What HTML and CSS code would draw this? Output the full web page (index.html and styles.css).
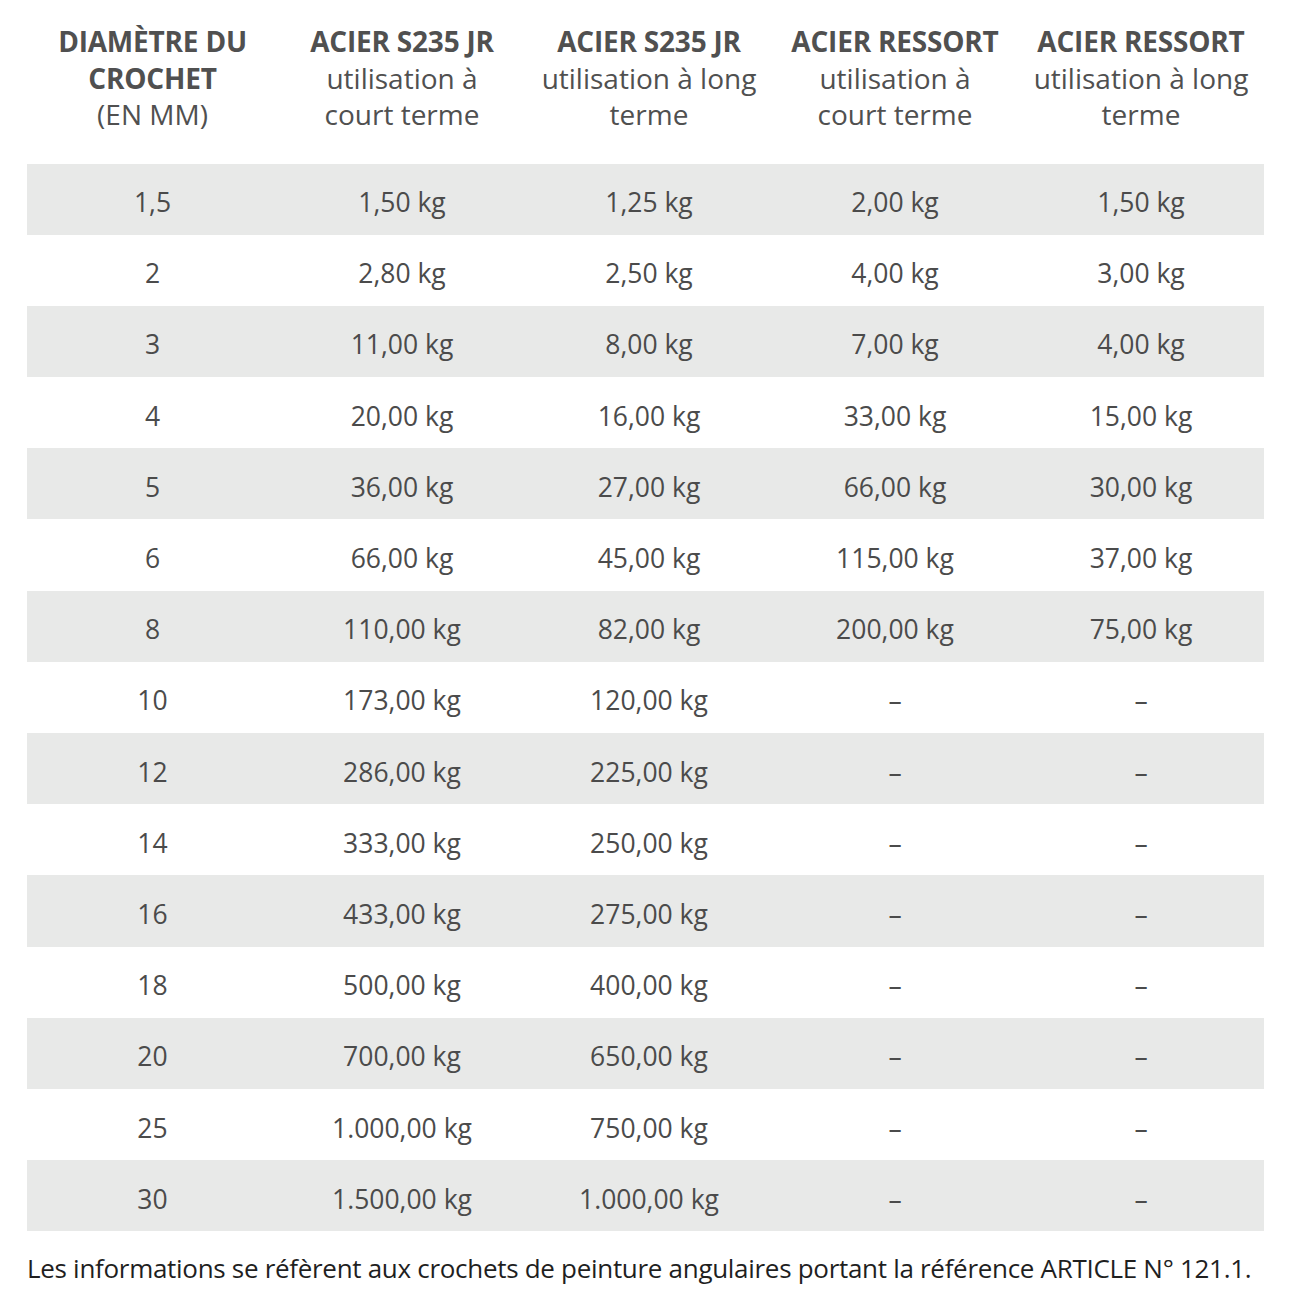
FILE: index.html
```html
<!DOCTYPE html>
<html lang="fr">
<head>
<meta charset="utf-8">
<link rel="stylesheet" href="styles.css">
</head>
<body>
<main class="page">
<table class="loads">
<colgroup>
<col class="c1"><col class="c2"><col class="c3"><col class="c4"><col class="c5">
</colgroup>
<thead>
<tr>
<th><span class="h">DIAMÈTRE DU</span><span class="h">CROCHET</span><span class="s">(EN MM)</span></th>
<th><span class="h">ACIER S235 JR</span><span class="s">utilisation à</span><span class="s">court terme</span></th>
<th><span class="h">ACIER S235 JR</span><span class="s">utilisation à long</span><span class="s">terme</span></th>
<th><span class="h">ACIER RESSORT</span><span class="s">utilisation à</span><span class="s">court terme</span></th>
<th><span class="h">ACIER RESSORT</span><span class="s">utilisation à long</span><span class="s">terme</span></th>
</tr>
</thead>
<tbody>
<tr><td>1,5</td><td>1,50 kg</td><td>1,25 kg</td><td>2,00 kg</td><td>1,50 kg</td></tr>
<tr><td>2</td><td>2,80 kg</td><td>2,50 kg</td><td>4,00 kg</td><td>3,00 kg</td></tr>
<tr><td>3</td><td>11,00 kg</td><td>8,00 kg</td><td>7,00 kg</td><td>4,00 kg</td></tr>
<tr><td>4</td><td>20,00 kg</td><td>16,00 kg</td><td>33,00 kg</td><td>15,00 kg</td></tr>
<tr><td>5</td><td>36,00 kg</td><td>27,00 kg</td><td>66,00 kg</td><td>30,00 kg</td></tr>
<tr><td>6</td><td>66,00 kg</td><td>45,00 kg</td><td>115,00 kg</td><td>37,00 kg</td></tr>
<tr><td>8</td><td>110,00 kg</td><td>82,00 kg</td><td>200,00 kg</td><td>75,00 kg</td></tr>
<tr><td>10</td><td>173,00 kg</td><td>120,00 kg</td><td>–</td><td>–</td></tr>
<tr><td>12</td><td>286,00 kg</td><td>225,00 kg</td><td>–</td><td>–</td></tr>
<tr><td>14</td><td>333,00 kg</td><td>250,00 kg</td><td>–</td><td>–</td></tr>
<tr><td>16</td><td>433,00 kg</td><td>275,00 kg</td><td>–</td><td>–</td></tr>
<tr><td>18</td><td>500,00 kg</td><td>400,00 kg</td><td>–</td><td>–</td></tr>
<tr><td>20</td><td>700,00 kg</td><td>650,00 kg</td><td>–</td><td>–</td></tr>
<tr><td>25</td><td>1.000,00 kg</td><td>750,00 kg</td><td>–</td><td>–</td></tr>
<tr><td>30</td><td>1.500,00 kg</td><td>1.000,00 kg</td><td>–</td><td>–</td></tr>
</tbody>
</table>
<p class="note">Les informations se réfèrent aux crochets de peinture angulaires portant la référence ARTICLE N° 121.1.</p>
</main>
</body>
</html>
```
FILE: styles.css
```css
html, body {
  margin: 0;
  padding: 0;
  background: #ffffff;
}
body {
  font-family: "Open Sans", "Noto Sans", sans-serif;
  color: #4a4a4a;
}
.page {
  padding: 23px 28px 0 27px;
  width: 1237px;
}
.loads {
  width: 1237px;
  border-collapse: collapse;
  table-layout: fixed;
}
.loads .c1 { width: 251px; }
.loads .c2 { width: 248px; }
.loads .c3 { width: 246px; }
.loads .c4 { width: 246px; }
.loads .c5 { width: 246px; }
.loads th {
  font-weight: 400;
  vertical-align: top;
  padding: 0 0 31px 0;
  text-align: center;
  font-size: 28px;
  line-height: 36.5px;
  color: #505050;
}
.loads th .h,
.loads th .s {
  display: block;
  white-space: nowrap;
}
.loads th .h {
  font-weight: 700;
  letter-spacing: -0.2px;
}
.loads td {
  height: 71.2px;
  padding: 6px 0 0 0;
  box-sizing: border-box;
  text-align: center;
  font-size: 26.5px;
  color: #4b4b4b;
}
.loads tbody tr:nth-child(odd) td {
  background: #e8e9e8;
}
.note {
  margin: 19px 0 0 0;
  font-size: 26px;
  letter-spacing: -0.3px;
  white-space: nowrap;
  color: #1f1f1f;
}
```
